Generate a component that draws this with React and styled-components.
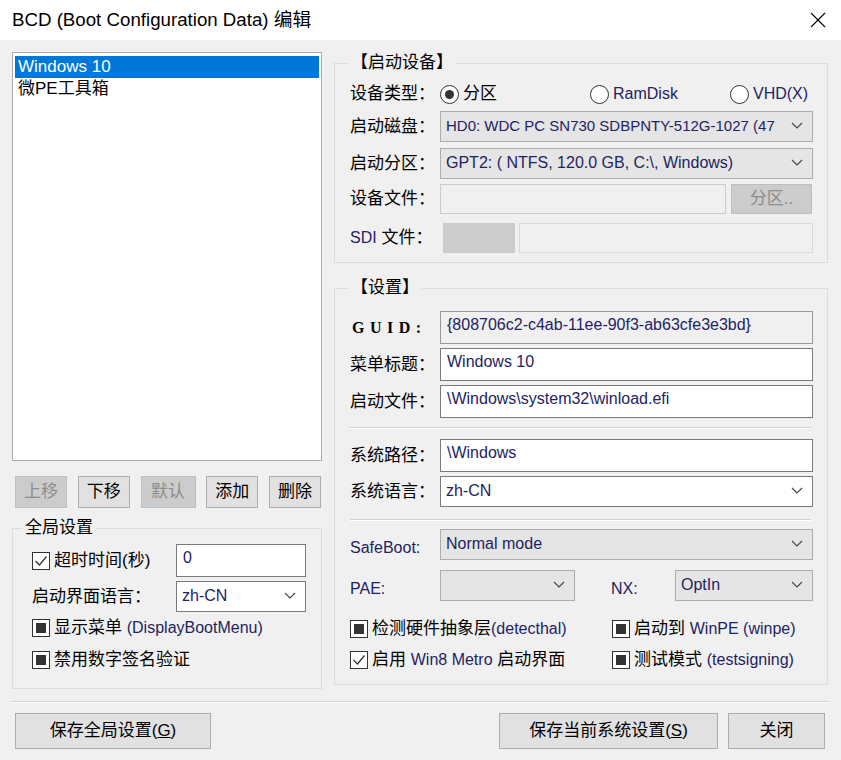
import styled, { createGlobalStyle } from 'styled-components'

const GlobalStyle = createGlobalStyle`
  html, body { margin: 0; padding: 0; background: #f0f0f0; }
  * { box-sizing: border-box; }
`

const Window = styled.div`
  width: 841px;
  height: 760px;
  background: #f0f0f0;
  font-family: "Liberation Sans", "Noto Sans CJK SC", sans-serif;
  font-size: 17px;
  line-height: 22px;
  color: #000;
  overflow: hidden;
`
const TitleBar = styled.div`
  height: 40px;
  background: #fff;
  display: flex;
  align-items: center;
  justify-content: space-between;
  padding: 0 15px 0 12px;
`
const TitleText = styled.div`
  font-size: 18.7px;
`
const Body = styled.div`
  padding: 12px 13px 0 12px;
`
const Columns = styled.div`
  display: grid;
  grid-template-columns: 310px 494px;
  column-gap: 12px;
  align-items: start;
`
const Column = styled.div`
  display: flex;
  flex-direction: column;
`
const ListBox = styled.div`
  height: 409px;
  background: #fff;
  border: 1px solid #a9abb0;
  padding: 3px 2px;
`
const ListItem = styled.div`
  height: 22px;
  line-height: 22px;
  padding: 0 3px;
  background: ${({ $selected }) => ($selected ? '#0078d7' : 'transparent')};
  color: ${({ $selected }) => ($selected ? '#fff' : '#000')};
`
const ButtonRow = styled.div`
  display: flex;
  justify-content: space-between;
  margin-top: 15px;
  padding: 0 1px 0 3px;
`
const Button = styled.div`
  width: ${({ $w }) => $w}px;
  height: ${({ $h }) => $h || 32}px;
  display: flex;
  align-items: center;
  justify-content: center;
  background: ${({ $disabled }) => ($disabled ? '#cccccc' : '#e1e1e1')};
  border: 1px solid ${({ $disabled }) => ($disabled ? '#bfbfbf' : '#adadad')};
  color: ${({ $disabled }) => ($disabled ? '#8c8c8c' : '#000')};
  flex-shrink: 0;
  white-space: nowrap;
`
const Group = styled.fieldset`
  margin: ${({ $mt }) => $mt || 0}px 0 0;
  border: 1px solid #dcdcdc;
  padding: ${({ $pad }) => $pad};
  min-width: 0;
`
const Legend = styled.legend`
  padding: 0 3px;
  margin-left: ${({ $ml }) => $ml || 0}px;
  line-height: 22px;
`
const GlobalGrid = styled.div`
  display: grid;
  grid-template-columns: 144px 130px;
  row-gap: 4px;
  align-items: center;
`
const Slot = styled.div`
  height: ${({ $h }) => $h}px;
`
const Stack = styled.div`
  display: flex;
  flex-direction: column;
`
const Row = styled.div`
  display: grid;
  grid-template-columns: ${({ $cols }) => $cols || '90px 1fr'};
  align-items: center;
  height: ${({ $h }) => $h}px;
  margin-top: ${({ $mt }) => $mt || 0}px;
`
const Label = styled.div`
  white-space: nowrap;
  color: ${({ $latin }) => ($latin ? '#1e2362' : '#000')};
  font-size: ${({ $latin }) => ($latin ? '16px' : '17px')};
  padding-top: ${({ $low }) => ($low ? '7px' : '0')};
  padding-left: ${({ $pl }) => $pl || 0}px;
`
const GuidLabel = styled.div`
  font-family: "Liberation Serif", serif;
  font-weight: 700;
  font-size: 16px;
  letter-spacing: 5.5px;
  padding-left: 2px;
`
const Field = styled.div`
  height: 100%;
  display: flex;
  align-items: center;
  padding: 0 6px 5px;
  background: ${({ $bg }) => $bg || '#fff'};
  border: 1px solid ${({ $bd }) => $bd || '#7a7a7a'};
  color: #1e2362;
  font-size: 16px;
  white-space: nowrap;
  overflow: hidden;
  margin-left: ${({ $ml }) => $ml || 0}px;
`
const Combo = styled.div`
  height: 100%;
  display: flex;
  align-items: center;
  padding: 0 9px 2px 5px;
  background: ${({ $white }) => ($white ? '#fff' : '#e5e5e5')};
  border: 1px solid ${({ $white }) => ($white ? '#7a7a7a' : '#adadad')};
  color: #1e2362;
  font-size: ${({ $size }) => $size || 16}px;
  white-space: nowrap;
  overflow: hidden;
`
const ComboText = styled.span`
  flex: 1;
  min-width: 0;
  overflow: hidden;
  margin-right: 6px;
`
const Pair = styled.div`
  display: grid;
  grid-template-columns: ${({ $cols }) => $cols};
  column-gap: ${({ $gap }) => $gap || 0}px;
  height: 100%;
`
const RadioItem = styled.div`
  display: flex;
  align-items: center;
  gap: 4px;
`
const RadioCircle = styled.span`
  width: 19px;
  height: 19px;
  border: 1px solid #333;
  border-radius: 50%;
  background: #fff;
  display: flex;
  align-items: center;
  justify-content: center;
  &::after {
    content: '';
    width: 9px;
    height: 9px;
    border-radius: 50%;
    background: ${({ $on }) => ($on ? '#333' : 'transparent')};
  }
`
const CheckItem = styled.div`
  display: flex;
  align-items: center;
  gap: 4px;
  white-space: nowrap;
  height: ${({ $h }) => $h || 24}px;
`
const Box = styled.span`
  width: 18px;
  height: 18px;
  border: 1px solid #333;
  background: #fff;
  display: flex;
  align-items: center;
  justify-content: center;
  flex-shrink: 0;
`
const Mixed = styled.span`
  width: 10px;
  height: 10px;
  background: #333;
`
const Lat = styled.span`
  color: #1e2362;
  font-size: 16px;
`
const Separator = styled.div`
  height: 2px;
  border-top: 1px solid #d0d0d0;
  border-bottom: 1px solid #fff;
  margin: ${({ $m }) => $m};
`
const CheckGrid = styled.div`
  display: grid;
  grid-template-columns: 262px 1fr;
  row-gap: 7px;
  margin-top: 16px;
`
const Footer = styled.div`
  display: flex;
  align-items: center;
  padding: 0 3px;
  margin-top: 10px;
  gap: 10px;
`
const Spacer = styled.div`
  flex: 1;
`

const Chevron = () => (
  <svg width="12" height="7" viewBox="0 0 12 7">
    <polyline points="1,1 6,6 11,1" fill="none" stroke="#444" strokeWidth="1.1" />
  </svg>
)

const CloseIcon = () => (
  <svg width="16" height="16" viewBox="0 0 16 16">
    <line x1="1" y1="1" x2="15" y2="15" stroke="#000" strokeWidth="1.1" />
    <line x1="15" y1="1" x2="1" y2="15" stroke="#000" strokeWidth="1.1" />
  </svg>
)

const Check = ({ state, children, h }) => (
  <CheckItem $h={h}>
    <Box>
      {state === 'checked' && (
        <svg width="14" height="14" viewBox="0 0 14 14">
          <polyline points="1.5,7 5.5,11 12.5,2.5" fill="none" stroke="#333" strokeWidth="1.3" />
        </svg>
      )}
      {state === 'mixed' && <Mixed />}
    </Box>
    <span>{children}</span>
  </CheckItem>
)

const Radio = ({ on, children }) => (
  <RadioItem>
    <RadioCircle $on={on} />
    <span>{children}</span>
  </RadioItem>
)

const Select = ({ children, white, size }) => (
  <Combo $white={white} $size={size}>
    <ComboText>{children}</ComboText>
    <Chevron />
  </Combo>
)

const App = () => {
  return (
    <Window>
      <GlobalStyle />
      <TitleBar>
        <TitleText>BCD (Boot Configuration Data) 编辑</TitleText>
        <CloseIcon />
      </TitleBar>
      <Body>
        <Columns>
          <Column>
            <ListBox>
              <ListItem $selected>Windows 10</ListItem>
              <ListItem>微PE工具箱</ListItem>
            </ListBox>
            <ButtonRow>
              <Button $w={52} $disabled>上移</Button>
              <Button $w={52}>下移</Button>
              <Button $w={55} $disabled>默认</Button>
              <Button $w={52}>添加</Button>
              <Button $w={52}>删除</Button>
            </ButtonRow>
            <Group $mt={9} $pad="5px 14px 13px 19px">
              <Legend $ml={-10}>全局设置</Legend>
              <GlobalGrid>
                <Check state="checked">超时时间(秒)</Check>
                <Slot $h={33}><Field>0</Field></Slot>
                <Label>启动界面语言：</Label>
                <Slot $h={31}><Select white>zh-CN</Select></Slot>
              </GlobalGrid>
              <Stack>
                <Check state="mixed" h={32}>显示菜单 <Lat>(DisplayBootMenu)</Lat></Check>
                <Check state="mixed" h={31}>禁用数字签名验证</Check>
              </Stack>
            </Group>
          </Column>

          <Column>
            <Group $pad="7px 14px 9px 15px">
              <Legend $ml={-2}>【启动设备】</Legend>
              <Stack>
                <Row $h={26} $cols="90px 150px 140px 1fr">
                  <Label>设备类型：</Label>
                  <Radio on>分区</Radio>
                  <Radio><Lat>RamDisk</Lat></Radio>
                  <Radio><Lat>VHD(X)</Lat></Radio>
                </Row>
                <Row $h={31} $mt={4}>
                  <Label>启动磁盘：</Label>
                  <Select size={15}>HD0: WDC PC SN730 SDBPNTY-512G-1027 (47</Select>
                </Row>
                <Row $h={31} $mt={6}>
                  <Label>启动分区：</Label>
                  <Select>GPT2: ( NTFS, 120.0 GB, C:\, Windows)</Select>
                </Row>
                <Row $h={30} $mt={5}>
                  <Label>设备文件：</Label>
                  <Pair $cols="286px 81px" $gap={5}>
                    <Field $bg="#f0f0f0" $bd="#cccccc" />
                    <Button $w={81} $h={30} $disabled>分区..</Button>
                  </Pair>
                </Row>
                <Row $h={30} $mt={9}>
                  <Label><Lat>SDI</Lat> 文件：</Label>
                  <Pair $cols="75px 1fr" $gap={4}>
                    <Field $ml={3} $bg="#cccccc" $bd="#cccccc" />
                    <Field $bg="#f0f0f0" $bd="#d9d9d9" />
                  </Pair>
                </Row>
              </Stack>
            </Group>

            <Group $mt={14} $pad="12px 14px 12px 15px">
              <Legend $ml={-2}>【设置】</Legend>
              <Stack>
                <Row $h={33}>
                  <GuidLabel>GUID:</GuidLabel>
                  <Field $bg="#f0f0f0" $bd="#999999">{'{808706c2-c4ab-11ee-90f3-ab63cfe3e3bd}'}</Field>
                </Row>
                <Row $h={33} $mt={4}>
                  <Label>菜单标题：</Label>
                  <Field>Windows 10</Field>
                </Row>
                <Row $h={33} $mt={4}>
                  <Label>启动文件：</Label>
                  <Field>\Windows\system32\winload.efi</Field>
                </Row>
                <Separator $m="9px 2px 10px 0" />
                <Row $h={33}>
                  <Label>系统路径：</Label>
                  <Field>\Windows</Field>
                </Row>
                <Row $h={31} $mt={4}>
                  <Label>系统语言：</Label>
                  <Select white>zh-CN</Select>
                </Row>
                <Separator $m="12px 2px 8px 0" />
                <Row $h={31}>
                  <Label $latin $low>SafeBoot:</Label>
                  <Select>Normal mode</Select>
                </Row>
                <Row $h={31} $mt={10} $cols="90px 135px 100px 1fr">
                  <Label $latin $low>PAE:</Label>
                  <Select />
                  <Label $latin $low $pl={36}>NX:</Label>
                  <Select>OptIn</Select>
                </Row>
                <CheckGrid>
                  <Check state="mixed">检测硬件抽象层<Lat>(detecthal)</Lat></Check>
                  <Check state="mixed">启动到 <Lat>WinPE (winpe)</Lat></Check>
                  <Check state="checked">启用 <Lat>Win8 Metro</Lat> 启动界面</Check>
                  <Check state="mixed">测试模式 <Lat>(testsigning)</Lat></Check>
                </CheckGrid>
              </Stack>
            </Group>
          </Column>
        </Columns>
        <Separator $m="12px 0 0" />
        <Footer>
          <Button $w={196} $h={36}>保存全局设置(<u>G</u>)</Button>
          <Spacer />
          <Button $w={219} $h={36}>保存当前系统设置(<u>S</u>)</Button>
          <Button $w={97} $h={36}>关闭</Button>
        </Footer>
      </Body>
    </Window>
  )
}

export default App
